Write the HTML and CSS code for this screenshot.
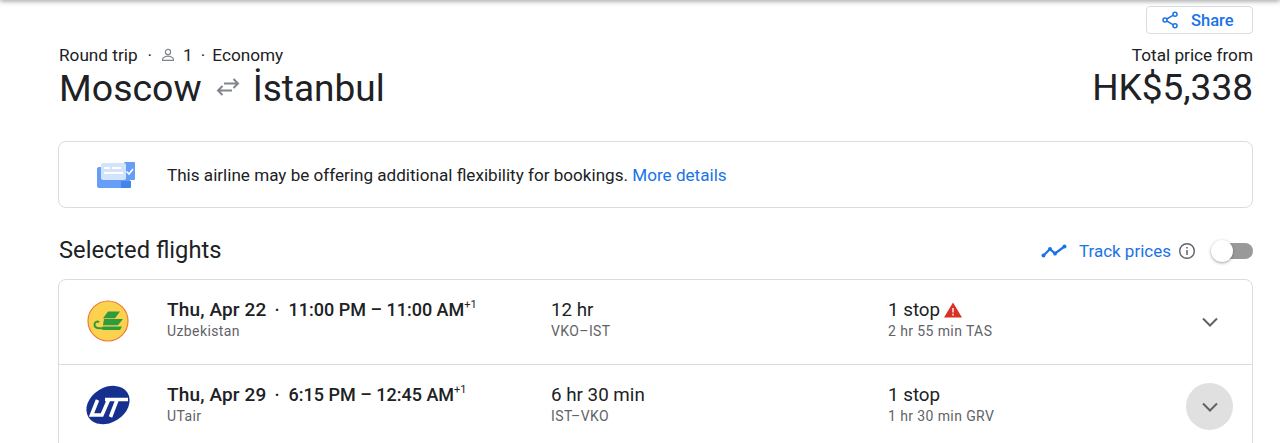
FILE: index.html
```html
<!DOCTYPE html>
<html lang="en">
<head>
<meta charset="utf-8">
<title>Flights</title>
<link rel="stylesheet" href="styles.css">
</head>
<body>
<div class="topbar"></div>
<main class="page">
  <div class="share-row">
    <button class="share">
      <svg class="share-icon" viewBox="0 0 18 18" width="18" height="18"><path d="M14 3.200 4 9l10 5.800" fill="none" stroke="#1a73e8" stroke-width="1.500"/><circle cx="14" cy="3.200" r="2" fill="#fff" stroke="#1a73e8" stroke-width="1.500"/><circle cx="4" cy="9" r="2" fill="#fff" stroke="#1a73e8" stroke-width="1.500"/><circle cx="14" cy="14.800" r="2" fill="#fff" stroke="#1a73e8" stroke-width="1.500"/></svg>
      <span>Share</span>
    </button>
  </div>
  <header class="summary">
    <div class="trip">
      <div class="meta">
        <span>Round trip</span><span class="dot dot-first">·</span>
        <svg class="person" viewBox="0 0 16 16" width="16" height="16"><circle cx="8" cy="5" r="2.600" fill="none" stroke="#80868b" stroke-width="1.200"/><path d="M2.600 13.400v-1.200c0-1.900 3.400-3 5.400-3s5.400 1.100 5.400 3v1.200z" fill="none" stroke="#80868b" stroke-width="1.200"/></svg>
        <span class="count">1</span><span class="dot dot-second">·</span><span>Economy</span>
      </div>
      <h1 class="route">
        <span>Moscow</span>
        <svg class="swap" viewBox="0 0 24 20" width="24" height="20"><path d="M2 13.500h14M6.500 9 2 13.500 6.500 18M22 6.500H8M17.500 2 22 6.500 17.500 11" fill="none" stroke="#80868b" stroke-width="2" transform="translate(0 -1)"/></svg>
        <span class="dest">İstanbul</span>
      </h1>
    </div>
    <div class="price">
      <div class="price-label">Total price from</div>
      <div class="price-value">HK$5,338</div>
    </div>
  </header>
  <section class="notice">
    <svg class="ticket" viewBox="0 0 38 26" width="38" height="26">
      <rect x="0" y="5" width="33" height="21" rx="2" fill="#669df6"/>
      <rect x="27" y="0" width="11" height="18" rx="1" fill="#669df6"/>
      <path d="M24 19h10v6a1 1 0 0 1-1 1h-9z" fill="#4285e8"/>
      <rect x="4" y="1" width="25" height="17" rx="2" fill="#d2e3fc"/>
      <rect x="7" y="10" width="19" height="2" fill="#fff"/>
      <path d="M7 6h6M15 6h9" stroke="#fff" stroke-width="2"/>
      <path d="M29.500 9.500 32 12l4-5" fill="none" stroke="#fff" stroke-width="1.600"/>
    </svg>
    <p class="notice-text">This airline may be offering additional flexibility for bookings. <a class="link">More details</a></p>
  </section>
  <div class="selected-head">
    <h2 class="selected-title">Selected flights</h2>
    <div class="track">
      <svg class="track-icon" viewBox="0 0 26 14" width="26" height="14"><path d="M2.500 11.500 9 5l5 4.500L23.500 2.500" fill="none" stroke="#1a73e8" stroke-width="2.200"/><circle cx="2.500" cy="11.500" r="2" fill="#1a73e8"/><circle cx="9" cy="5" r="2" fill="#1a73e8"/><circle cx="14" cy="9.500" r="2" fill="#1a73e8"/><circle cx="23.500" cy="2.500" r="2" fill="#1a73e8"/></svg>
      <span class="track-label">Track prices</span>
      <svg class="info" viewBox="0 0 18 18" width="18" height="18"><circle cx="9" cy="9" r="7.300" fill="none" stroke="#5f6368" stroke-width="1.400"/><path d="M9 8v5M9 5v1.600" stroke="#5f6368" stroke-width="1.500"/></svg>
      <span class="toggle"><span class="knob"></span></span>
    </div>
  </div>
  <section class="card">
    <article class="flight">
      <div class="logo-cell">
        <svg viewBox="0 0 42 42" width="42" height="42"><circle cx="21" cy="21" r="20" fill="#fbd24e" stroke="#ee7a3a" stroke-width="1.200"/><path d="M21 11.500h12l-5 6.800H16zM17 19h19l-5 6.300H16zM15.500 26.500H35l-2 3.500H15.500z" fill="#2e9b3c"/><path d="M17 28.300h-4.500c-3 0-5-1.500-5-3.800s3-3.800 4.500-2.200" fill="none" stroke="#2e9b3c" stroke-width="2"/></svg>
      </div>
      <div class="when">
        <div class="primary"><span class="date">Thu, Apr 22</span><span class="sep">·</span><span>11:00 PM – 11:00 AM<sup class="plus">+1</sup></span></div>
        <div class="secondary">Uzbekistan</div>
      </div>
      <div class="duration">
        <div class="plain">12 hr</div>
        <div class="secondary">VKO–IST</div>
      </div>
      <div class="stops">
        <div class="plain stop-line">1 stop
          <svg class="warn" viewBox="0 0 18 16" width="18" height="16"><path d="M9 0.500 18 15.500H0z" fill="#d93025"/><path d="M9 6v4.500M9 11.800v1.600" stroke="#fff" stroke-width="1.400"/></svg>
        </div>
        <div class="secondary">2 hr 55 min TAS</div>
      </div>
      <div class="chev-cell"><span class="chev"><svg viewBox="0 0 16 10" width="16" height="10"><path d="m1 1.500 7 7 7-7" fill="none" stroke="#5f6368" stroke-width="2"/></svg></span></div>
    </article>
    <article class="flight">
      <div class="logo-cell">
        <svg viewBox="0 0 42 42" width="42" height="42"><ellipse cx="21" cy="20" rx="23" ry="17.500" transform="rotate(-32 21 20)" fill="#16308f"/><path d="M10.500 15 4.500 30h10.500l6.500-15M18 14.500h23M30 15 23.500 32" fill="none" stroke="#fff" stroke-width="3.600"/></svg>
      </div>
      <div class="when">
        <div class="primary"><span class="date">Thu, Apr 29</span><span class="sep">·</span><span>6:15 PM – 12:45 AM<sup class="plus">+1</sup></span></div>
        <div class="secondary">UTair</div>
      </div>
      <div class="duration">
        <div class="plain">6 hr 30 min</div>
        <div class="secondary">IST–VKO</div>
      </div>
      <div class="stops">
        <div class="plain stop-line">1 stop</div>
        <div class="secondary">1 hr 30 min GRV</div>
      </div>
      <div class="chev-cell"><span class="chev chev-hover"><svg viewBox="0 0 16 10" width="16" height="10"><path d="m1 1.500 7 7 7-7" fill="none" stroke="#5f6368" stroke-width="2"/></svg></span></div>
    </article>
  </section>
</main>
</body>
</html>
```
FILE: styles.css
```css
* { box-sizing: border-box; }
html, body { margin: 0; height: 443px; overflow: hidden; background: #fff; }
body { font-family: "Roboto", "Liberation Sans", sans-serif; color: #202124; position: relative; }
.topbar { position: absolute; top: -4px; left: 0; right: 0; height: 4px; box-shadow: 0 1px 5px rgba(60,64,67,.6); }
.page { padding: 6px 27px 0 58px; }
.share-row { display: flex; justify-content: flex-end; height: 28px; }
.share { display: flex; align-items: center; gap: 12px; width: 107px; height: 28px; padding: 0 0 0 14px; background: #fff; border: 1px solid #dadce0; border-radius: 4px; color: #1a73e8; font: 500 16.500px "Roboto", sans-serif; }
.summary { display: flex; justify-content: space-between; margin-top: 10px; height: 80px; }
.meta { display: flex; align-items: center; height: 22px; padding-left: 1px; font-size: 17.200px; color: #202124; }
.dot-first { margin: 0 8px 0 10px; }
.dot-second { margin: 0 7px 0 8px; }
.person { margin-right: 3px; }
.count { margin-left: 4px; }
.route { margin: 0; display: flex; align-items: center; gap: 14px; height: 44px; padding-left: 1px; font-size: 37.500px; font-weight: 400; }
.dest { margin-left: -1px; font-size: 37px; }
.price { text-align: right; }
.price-label { height: 22px; line-height: 22px; font-size: 17.200px; color: #202124; }
.price-value { height: 44px; line-height: 44px; font-size: 37px; }
.notice { display: flex; align-items: center; height: 67px; margin-top: 17px; padding-left: 38px; border: 1px solid #dadce0; border-radius: 8px; }
.notice-text { margin: 0 0 0 32px; font-size: 17.100px; color: #202124; }
.link { color: #1a73e8; }
.selected-head { display: flex; justify-content: space-between; align-items: center; height: 36px; margin-top: 24px; padding-left: 1px; }
.selected-title { margin: 0; font-size: 23.700px; font-weight: 400; }
.track { display: flex; align-items: center; margin-top: 2px; }
.track-icon { margin-right: 12px; }
.track-label { color: #1a73e8; font-size: 17px; }
.info { margin-left: 7px; }
.toggle { position: relative; display: block; width: 40px; height: 16px; margin-left: 17px; border-radius: 8px; background: #999; }
.knob { position: absolute; left: -2px; top: -3px; width: 22px; height: 22px; border-radius: 50%; background: #fff; box-shadow: 0 1px 3px rgba(60,64,67,.5); }
.card { margin-top: 11px; height: 200px; border: 1px solid #dadce0; border-radius: 8px; }
.flight { display: grid; grid-template-columns: 108px 384px 337px 1fr 81px; height: 85px; padding-top: 17px; border-bottom: 1px solid #dadce0; }
.logo-cell { padding: 3px 0 0 28px; }
.logo-cell svg { display: block; overflow: visible; }
.primary { display: flex; font-size: 18px; font-weight: 500; line-height: 26px; }
.date { font-size: 19px; letter-spacing: .15px; }
.sep { margin: 0 9px 0 8px; }
.plus { font-size: 11px; line-height: 0; vertical-align: 8px; font-weight: 400; }
.plain { font-size: 18.800px; line-height: 26px; }
.secondary { margin-top: -1px; font-size: 14px; line-height: 18px; color: #5f6368; letter-spacing: .4px; }
.stop-line { display: flex; align-items: center; gap: 4px; }
.chev-cell { display: flex; padding: 1px 0 0 15px; }
.chev { display: flex; align-items: center; justify-content: center; width: 47px; height: 47px; border-radius: 50%; }
.chev-hover { background: #e0e0e0; }
```
